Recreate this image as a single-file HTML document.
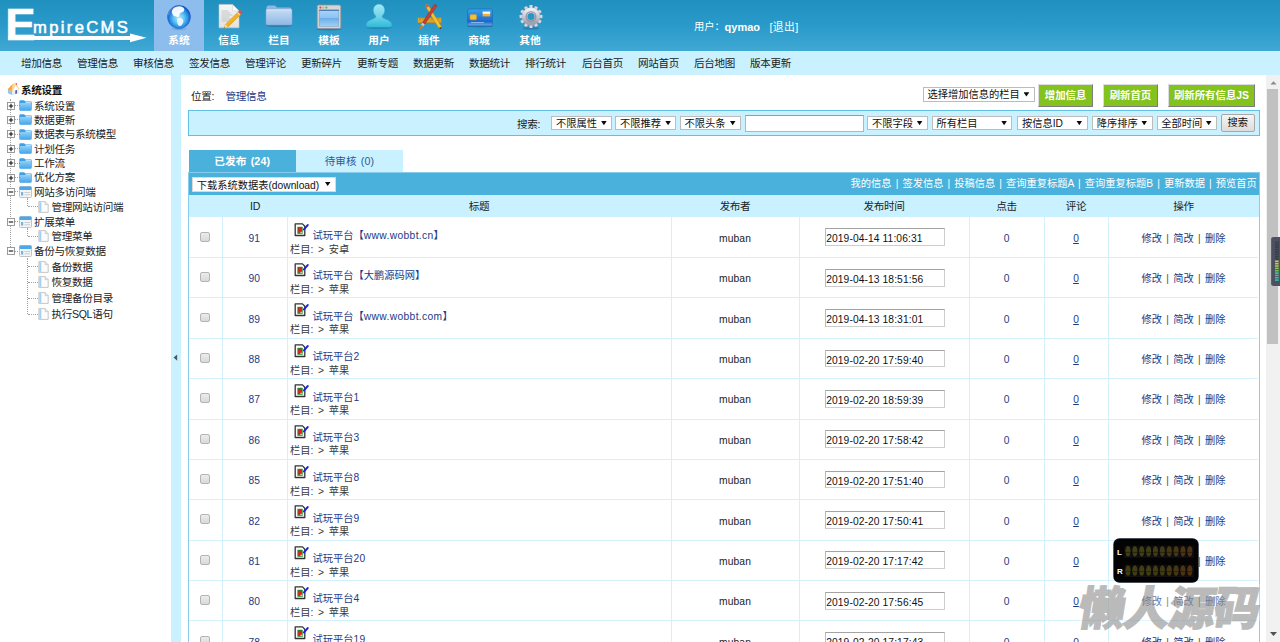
<!DOCTYPE html>
<html lang="zh-CN">
<head>
<meta charset="utf-8">
<title>EmpireCMS</title>
<style>
*{box-sizing:border-box;margin:0;padding:0}
html,body{width:1280px;height:642px;overflow:hidden;background:#c9f1ff}
body{position:relative;font-family:"Liberation Sans","Noto Sans CJK SC",sans-serif;font-size:10.25px;color:#222;line-height:1}
a{color:#1c3a85;text-decoration:none}
.abs{position:absolute}
/* header */
#hd{position:absolute;left:0;top:0;width:1280px;height:51px;background:linear-gradient(#2090bf,#2a9aca 50%,#40a8d4)}
#act{position:absolute;left:154px;top:0;width:50px;height:51px;background:#8cbdec}
.nv{position:absolute;top:35px;width:50px;text-align:center;color:#fff;font-weight:bold;font-size:10.7px;line-height:11px}
.ic{position:absolute;top:2px;width:30px;height:30px}
#usr{position:absolute;left:694px;top:20.700px;color:#fff;font-size:10.25px;line-height:12px;white-space:pre}
/* menu */
#mn{position:absolute;left:0;top:51px;width:1280px;height:24px;background:#c9f1ff}
#mn span{position:absolute;top:5.500px;font-size:10.6px;letter-spacing:-.35px;line-height:12px;color:#222;white-space:nowrap}
/* panels */
#lp{position:absolute;left:0;top:75px;width:171px;height:567px;background:#fff}
#mp{position:absolute;left:181px;top:75px;width:1086px;height:567px;background:#fff;overflow:hidden}
.tt{font-size:10.6px;letter-spacing:-.35px;line-height:12px;white-space:nowrap;color:#222}

.sel{position:absolute;height:14px;background:#fff;border:1px solid #bcbcbc;font-size:10.25px;line-height:14.800px;padding-left:3.700px;color:#111;white-space:nowrap;overflow:hidden}
.sel i{position:absolute;right:4.400px;top:4px;width:5.800px;height:4.400px;background:#0a0a0a;clip-path:polygon(0 0,100% 0,50% 100%)}
.gb{position:absolute;top:9.300px;height:22.600px;background:#84c21e;border:1.700px solid;border-color:#dcdce0 #7d7d7d #7d7d7d #dcdce0;color:#fff;font-weight:bold;font-size:10.4px;line-height:22.300px;text-align:center;white-space:nowrap}
#sb{position:absolute;left:7px;top:35px;width:1071.500px;height:26px;background:#c9f1ff;border:1px solid #63bfe6}
#tab1{position:absolute;left:7.700px;top:75.300px;width:107px;height:21.500px;background:#4ab1dc;color:#fff;font-weight:bold;text-align:center;font-size:10.7px;line-height:23.400px;word-spacing:1px;letter-spacing:.1px}
#tab2{position:absolute;left:114.700px;top:75.300px;width:107.300px;height:21.500px;background:#c9f1ff;color:#2a5c9a;text-align:center;font-size:10.6px;line-height:23.400px;word-spacing:1px;letter-spacing:.1px}
#tbar{position:absolute;left:7px;top:96.500px;width:1071.500px;height:23.400px;background:#4ab1dc}
#thr{position:absolute;left:7px;top:119.900px;width:1071.500px;height:22.300px;background:#c9f1ff}
#thr span{position:absolute;top:5px;font-size:10.6px;letter-spacing:-.35px;line-height:12px;color:#222;text-align:center}
#tb{position:absolute;left:7px;top:96.500px;width:1071.500px;height:480px;border:1px solid #86cdee;border-bottom:0}
.vl{position:absolute;top:142px;width:1px;height:430px;background:#d3f1fd}
.hl{position:absolute;left:8px;width:1069px;height:1px;background:#d3f1fd}
.r{position:absolute;left:0;width:1086px;height:40px;font-size:10.25px;line-height:12px;color:#222}
.r>*{position:absolute;white-space:nowrap}
.cb{left:19.300px;top:14.700px;width:9.800px;height:9.800px;border:1px solid #b4b4b4;border-radius:2px;background:linear-gradient(#ececec,#d9d9d9)}
.id{left:41.200px;top:15.800px;width:64px;text-align:center;color:#1c3a85}
.ti{left:131.500px;top:12.900px;color:#1c3a85}
.cl{left:109px;top:26.400px;color:#3a3a3a;word-spacing:1.900px}
.au{left:490px;top:15.800px;width:128px;text-align:center;color:#222;letter-spacing:.15px}
.dt{left:643.500px;top:11.300px;width:120.500px;height:17.700px;border:1px solid #cdcdcd;border-top-color:#a3a3a3;border-left-color:#bbb;background:#fff;padding-left:.7px;line-height:19.700px;color:#111;letter-spacing:.1px}
.hit{left:788px;top:15.800px;width:75px;text-align:center;color:#1c3a85}
.cm{left:863px;top:15.800px;width:64px;text-align:center;color:#1c3a85;text-decoration:underline}
.op{left:927px;top:15.800px;width:151px;text-align:center;color:#6e4a14;word-spacing:1.400px}
.op a{color:#1c3a85}
.l{letter-spacing:.36px}
</style>
</head>
<body>
<div id="hd">
  <div id="act"></div>
  <svg class="abs" style="left:0;top:0" width="154" height="51" viewBox="0 0 154 51">
    <text transform="translate(5.300,39.700) scale(1.020,1)" font-family="Liberation Sans, sans-serif" font-weight="bold" font-size="44.5" fill="#fff" stroke="#fff" stroke-width=".6">E</text>
    <rect x="8.3" y="36" width="124" height="4" fill="#fff"/>
    <polygon points="130,33.4 146.5,37.8 130,42.2" fill="#fff"/>
    <text x="33" y="33.4" font-family="Liberation Sans, sans-serif" font-size="16.6" letter-spacing="2.35" fill="#fff" stroke="#fff" stroke-width=".55">mpireCMS</text>
  </svg>
  <!-- globe -->
  <svg class="ic" style="left:164.400px;top:2.800px" viewBox="0 0 30 30">
    <defs>
      <radialGradient id="gl" cx="0.5" cy="0.55" r="0.52"><stop offset="0" stop-color="#bfeaff"/><stop offset="0.45" stop-color="#5cc3f3"/><stop offset="0.75" stop-color="#2b8be6"/><stop offset="1" stop-color="#0f4fc0"/></radialGradient>
      <radialGradient id="gs" cx="0.5" cy="0.5" r="0.5"><stop offset="0" stop-color="#3a6fb0" stop-opacity=".6"/><stop offset="1" stop-color="#3a6fb0" stop-opacity="0"/></radialGradient>
    </defs>
    <ellipse cx="15" cy="25.600" rx="9" ry="2.200" fill="url(#gs)"/>
    <circle cx="15" cy="14" r="11.700" fill="url(#gl)"/>
    <path d="M8.500 6.500c2-2.600 6.500-4 10-2.600 2 1 2.500 3 1 4.500-1.200 1.200-2.600.8-3.600 2-.9 1.200.2 2.600-1.400 3.400-1.500.6-2.300-1-3.600-.6-1.500.5-1.800-1.600-2.600-2.800-.7-1.200-.7-2.700.2-3.900z" fill="#fff" opacity=".93"/>
    <path d="M13.500 15.500c1.600-1 4.600-.4 5.600 1.300.9 1.600-.2 4.300-1.900 5.600-1.500 1.100-3 .3-3.500-1.400-.4-1.500-1.500-4.400-.2-5.500z" fill="#eefaff" opacity=".9"/>
    <path d="M3.600 12c.3-4.600 4.300-9 9.600-9.600-4 1.600-7.600 5.200-8 9.800z" fill="#fff" opacity=".25"/>
  </svg>
  <!-- doc + pencil -->
  <svg class="ic" style="left:214px" viewBox="0 0 30 30">
    <defs><linearGradient id="pg" x1="0" y1="0" x2="0" y2="1"><stop offset="0" stop-color="#f6f6f6"/><stop offset="1" stop-color="#e2e2e2"/></linearGradient>
    <linearGradient id="pc" x1="0" y1="0" x2="1" y2="1"><stop offset="0" stop-color="#ffd75a"/><stop offset=".5" stop-color="#f6b21b"/><stop offset="1" stop-color="#d98c0c"/></linearGradient></defs>
    <path d="M5 2.400h13.500l6.500 6.500v16.900h-20z" fill="url(#pg)" stroke="#c5c7c9" stroke-width=".6"/>
    <path d="M18.500 2.400v6.500h6.500z" fill="#fff" stroke="#c5c7c9" stroke-width=".5"/>
    <g stroke="#a9acae" stroke-width=".7" opacity=".85"><path d="M7.500 9h7M7.500 11h9M7.500 13h11M7.500 15h8M7.500 17h9M7.500 19h7"/></g>
    <path d="M10 26.300l1.400-3.900L24 9.800l2.700 2.700-12.700 12.500z" fill="url(#pc)" stroke="#c98a12" stroke-width=".4"/>
    <path d="M10 26.300l1.400-3.900 2.600 2.600z" fill="#f3dcb0"/><path d="M10 26.300l.5-1.400.9.900z" fill="#555"/>
    <path d="M23 10.800l1-1 2.700 2.700-1 1z" fill="#d8dadc"/>
    <path d="M24 9.800l1.200-1.200q.8-.6 1.600 0l1.200 1.200q.6.800 0 1.600l-1.300 1.100z" fill="#d9534f"/>
  </svg>
  <!-- folder -->
  <svg class="ic" style="left:264.200px;top:1.200px" viewBox="0 0 30 30">
    <defs><linearGradient id="fd" x1="0" y1="0" x2="0" y2="1"><stop offset="0" stop-color="#c6ddf5"/><stop offset="1" stop-color="#8fb7e4"/></linearGradient></defs>
    <ellipse cx="15" cy="24.5" rx="13" ry="1.6" fill="#2b5c86" opacity=".45"/>
    <path d="M2.5 6.5q0-2 2-2h6.5l2 2h12.5q2 0 2 2v2h-25z" fill="#93b5de"/>
    <rect x="2" y="8" width="26" height="16" rx="1.5" fill="url(#fd)" stroke="#82a6d2" stroke-width=".5"/>
    <path d="M2.5 9h25" stroke="#dbe9f8" stroke-width=".8"/>
  </svg>
  <!-- window -->
  <svg class="ic" style="left:314px" viewBox="0 0 30 30">
    <defs><linearGradient id="wn" x1="0" y1="0" x2="0" y2="1"><stop offset="0" stop-color="#a9d4f8"/><stop offset=".5" stop-color="#8cc2f2"/><stop offset=".52" stop-color="#6eaee9"/><stop offset="1" stop-color="#9ed0f7"/></linearGradient></defs>
    <ellipse cx="15" cy="27.2" rx="12.5" ry="1.3" fill="#2b5c86" opacity=".45"/>
    <rect x="3.2" y="3" width="23.6" height="23.5" rx="1.6" fill="#d4d6d6" stroke="#8f9496" stroke-width=".8"/>
    <rect x="5.2" y="8" width="19.6" height="16.3" fill="url(#wn)" stroke="#7a9cbd" stroke-width=".5"/><path d="M5.200 8.300h19.600" stroke="#2a63ad" stroke-width=".9"/>
    <circle cx="6.4" cy="5.6" r="1.1" fill="#e2483d"/><circle cx="9.4" cy="5.6" r="1.1" fill="#e9b531"/><circle cx="12.4" cy="5.6" r="1.1" fill="#5fb648"/>
  </svg>
  <!-- user -->
  <svg class="ic" style="left:364px" viewBox="0 0 30 30">
    <defs><linearGradient id="us" x1="0" y1="0" x2="0" y2="1"><stop offset="0" stop-color="#a3e8f4"/><stop offset=".55" stop-color="#6fd3ea"/><stop offset="1" stop-color="#2dbbdb"/></linearGradient></defs>
    <ellipse cx="15" cy="25.6" rx="12.5" ry="1.5" fill="#1f6b8f" opacity=".4"/>
    <path d="M15 2.2c3.4 0 5.6 2.6 5.6 6 0 2.5-1.2 4.6-2.6 5.9-.3 1.600 1.400 2.500 4.600 3.700 3.600 1.400 5 2.600 5 5.200 0 1.300-.8 2-2.200 2H4.600c-1.400 0-2.200-.7-2.200-2 0-2.600 1.400-3.800 5-5.200 3.200-1.200 4.900-2.100 4.600-3.700C10.600 12.800 9.400 10.700 9.400 8.200c0-3.400 2.200-6 5.600-6z" fill="url(#us)" stroke="#4fb3cc" stroke-width=".4"/>
  </svg>
  <!-- plugins -->
  <svg class="ic" style="left:414px" viewBox="0 0 30 30">
    <rect x="3.5" y="15.5" width="24" height="5.4" fill="#d7a430" stroke="#a87a18" stroke-width=".5"/>
    <g stroke="#9c7414" stroke-width=".6"><path d="M6 15.700v2.400M9 15.700v1.600M12 15.700v2.400M15 15.700v1.600M18 15.700v2.400M21 15.700v1.600M24 15.700v2.400"/></g>
    <path d="M11 3.600l2.600-1.500 14 22.600-.6 2.800-2.300-1.500z" fill="#f1c232" stroke="#b8860b" stroke-width=".5"/>
    <path d="M11 3.600l2.600-1.500 1.300 2.100-2.600 1.500z" fill="#d9534f"/>
    <path d="M27.600 24.700l-.6 2.800-2.300-1.500z" fill="#444"/>
    <path d="M20.600 2.200l2.500 1.400-12.300 18.600-2.500-1.400z" fill="#cc3b34" stroke="#8e2620" stroke-width=".4"/>
    <path d="M8.300 20.800l2.500 1.400-1.400 2.300-2.500-1.400z" fill="#c9c9c9"/>
    <path d="M6.900 23.100l2.500 1.400c-.6 1.800-2.600 3.400-5.200 3.300 1.400-1.300 1.800-3.100 2.700-4.700z" fill="#b78136"/>
  </svg>
  <!-- card -->
  <svg class="ic" style="left:465px" viewBox="0 0 30 30">
    <defs><linearGradient id="cd" x1="0" y1="0" x2="0" y2="1"><stop offset="0" stop-color="#3ba2ee"/><stop offset=".75" stop-color="#1c68cc"/><stop offset="1" stop-color="#6fb0ea"/></linearGradient></defs>
    <ellipse cx="15" cy="24.200" rx="13" ry="1.300" fill="#1f4f7f" opacity=".45"/>
    <rect x="2.600" y="7" width="24.800" height="16.800" rx="1.600" fill="url(#cd)" stroke="#1a5cb0" stroke-width=".5"/>
    <rect x="5" y="12.600" width="6.600" height="5.200" rx="1.200" fill="#f2c230" stroke="#c99a1b" stroke-width=".5"/>
    <rect x="17.600" y="9.600" width="7.600" height="2.300" fill="#fff"/>
    <rect x="17.600" y="11.900" width="7.600" height="2.500" fill="#f2b12c"/>
    <path d="M6 20.600h13" stroke="#a9cdf2" stroke-width=".8"/>
  </svg>
  <!-- gear -->
  <svg class="ic" style="left:515.500px;top:1.700px" viewBox="0 0 30 30">
    <defs><linearGradient id="gr" x1="0" y1="0" x2="0" y2="1"><stop offset="0" stop-color="#ecedf2"/><stop offset="1" stop-color="#a0a2b2"/></linearGradient></defs>
    <ellipse cx="15" cy="26.300" rx="8.500" ry="1.300" fill="#1f4f7f" opacity=".4"/>
    <g fill="url(#gr)" stroke="#9a9cab" stroke-width=".3">
      <g id="tth"><path d="M13.500 3.400l.5-.3h2l.5.300.600 4.600h-4.200z"/></g>
      <use href="#tth" transform="rotate(30 15 14.500)"/><use href="#tth" transform="rotate(60 15 14.500)"/><use href="#tth" transform="rotate(90 15 14.500)"/>
      <use href="#tth" transform="rotate(120 15 14.500)"/><use href="#tth" transform="rotate(150 15 14.500)"/><use href="#tth" transform="rotate(180 15 14.500)"/>
      <use href="#tth" transform="rotate(210 15 14.500)"/><use href="#tth" transform="rotate(240 15 14.500)"/><use href="#tth" transform="rotate(270 15 14.500)"/>
      <use href="#tth" transform="rotate(300 15 14.500)"/><use href="#tth" transform="rotate(330 15 14.500)"/>
    </g>
    <circle cx="15" cy="14.500" r="6.200" fill="none" stroke="url(#gr)" stroke-width="5.400"/>
    <circle cx="15" cy="14.500" r="4.700" fill="none" stroke="#8b8d9e" stroke-width="1.600" opacity=".75"/>
  </svg>
  <div class="nv" style="left:154px">系统</div>
  <div class="nv" style="left:204px">信息</div>
  <div class="nv" style="left:254px">栏目</div>
  <div class="nv" style="left:304px">模板</div>
  <div class="nv" style="left:354px">用户</div>
  <div class="nv" style="left:404px">插件</div>
  <div class="nv" style="left:454px">商城</div>
  <div class="nv" style="left:505px">其他</div>
  <div id="usr">用户：<b style="position:absolute;left:30.600px;font-size:11px">qymao</b><span style="position:absolute;left:75.400px;font-size:10.8px;letter-spacing:.4px">[退出]</span></div>
</div>
<div id="mn">
  <span style="left:21px">增加信息</span><span style="left:77px">管理信息</span><span style="left:133px">审核信息</span><span style="left:189px">签发信息</span><span style="left:245px">管理评论</span><span style="left:301px">更新碎片</span><span style="left:357px">更新专题</span><span style="left:413px">数据更新</span><span style="left:469px">数据统计</span><span style="left:525px">排行统计</span><span style="left:582px">后台首页</span><span style="left:638px">网站首页</span><span style="left:694px">后台地图</span><span style="left:750px">版本更新</span>
</div>
<svg width="0" height="0" style="position:absolute"><defs><linearGradient id="fg" x1="0" y1="0" x2="0" y2="1"><stop offset="0" stop-color="#8fd0f8"/><stop offset="1" stop-color="#49a8ec"/></linearGradient></defs></svg>
<div id="lp">
<svg class="abs" style="left:6.500px;top:8px" width="13" height="13" viewBox="0 0 13 13"><path d="M1 6.500l4.200 1.800v4L1 10.200z" fill="#9cc4ee"/><path d="M5.200 8.300l6.800-2.500v4.700l-6.800 1.800z" fill="#e3eefb"/><path d="M8.300 7.600l1.700-.6v3.600l-1.700.5z" fill="#5a5a9a"/><path d="M.4 6.600L5.600 1l3.200-.6L5.400 8.600z" fill="#f7a63a"/><path d="M5.600 1l3.200-.6 4 5.600-1 .6-3.200-4.200L5.400 8.600 4.600 8z" fill="#fbd9a0"/><path d="M8.600.2l.9-.1.700 1.400-.9.400z" fill="#e2483d"/></svg>
<div class="abs tt" style="left:21px;top:9.200px;font-weight:bold;color:#111">系统设置</div>
<div class="abs" style="left:10px;top:24px;width:0;height:152px;border-left:1px dotted #a2a2a2"></div>
<div class="abs" style="left:14px;top:30.3px;width:6px;height:0;border-top:1px dotted #a2a2a2"></div>
<svg class="abs" style="left:6.800px;top:26.9px" width="8" height="8" viewBox="0 0 8 8"><rect x=".5" y=".5" width="7" height="7" fill="#fff" stroke="#909090" stroke-width=".9"/><path d="M1.800 4h4.400M4 1.800v4.400" stroke="#111" stroke-width="1.100"/></svg>
<svg class="abs" style="left:19.400px;top:25.3px" width="13" height="11" viewBox="0 0 13 11"><path d="M.3 1.600q0-1.300 1.300-1.300h3.200q.8 0 1.200.9h5.400q1.300 0 1.300 1.300v6.900q0 1.300-1.300 1.300h-9.800q-1.300 0-1.300-1.300z" fill="#3d9fe6"/><path d="M6.300 1.500h4.900q.9 0 .9.900v.8h-5.200z" fill="#b4e1fb"/><rect x="1" y="3.100" width="11" height="6.900" rx=".8" fill="url(#fg)"/></svg>
<div class="abs tt" style="left:34px;top:24.8px">系统设置</div>
<div class="abs" style="left:14px;top:44.4px;width:6px;height:0;border-top:1px dotted #a2a2a2"></div>
<svg class="abs" style="left:6.800px;top:41.0px" width="8" height="8" viewBox="0 0 8 8"><rect x=".5" y=".5" width="7" height="7" fill="#fff" stroke="#909090" stroke-width=".9"/><path d="M1.800 4h4.400M4 1.800v4.400" stroke="#111" stroke-width="1.100"/></svg>
<svg class="abs" style="left:19.400px;top:39.4px" width="13" height="11" viewBox="0 0 13 11"><path d="M.3 1.600q0-1.300 1.300-1.300h3.200q.8 0 1.200.9h5.400q1.300 0 1.300 1.300v6.900q0 1.300-1.300 1.300h-9.800q-1.300 0-1.300-1.300z" fill="#3d9fe6"/><path d="M6.300 1.500h4.900q.9 0 .9.900v.8h-5.200z" fill="#b4e1fb"/><rect x="1" y="3.100" width="11" height="6.900" rx=".8" fill="url(#fg)"/></svg>
<div class="abs tt" style="left:34px;top:38.9px">数据更新</div>
<div class="abs" style="left:14px;top:58.8px;width:6px;height:0;border-top:1px dotted #a2a2a2"></div>
<svg class="abs" style="left:6.800px;top:55.4px" width="8" height="8" viewBox="0 0 8 8"><rect x=".5" y=".5" width="7" height="7" fill="#fff" stroke="#909090" stroke-width=".9"/><path d="M1.800 4h4.400M4 1.800v4.400" stroke="#111" stroke-width="1.100"/></svg>
<svg class="abs" style="left:19.400px;top:53.8px" width="13" height="11" viewBox="0 0 13 11"><path d="M.3 1.600q0-1.300 1.300-1.300h3.200q.8 0 1.200.9h5.400q1.300 0 1.300 1.300v6.900q0 1.300-1.300 1.300h-9.800q-1.300 0-1.300-1.300z" fill="#3d9fe6"/><path d="M6.300 1.500h4.900q.9 0 .9.900v.8h-5.200z" fill="#b4e1fb"/><rect x="1" y="3.100" width="11" height="6.900" rx=".8" fill="url(#fg)"/></svg>
<div class="abs tt" style="left:34px;top:53.3px">数据表与系统模型</div>
<div class="abs" style="left:14px;top:73.1px;width:6px;height:0;border-top:1px dotted #a2a2a2"></div>
<svg class="abs" style="left:6.800px;top:69.7px" width="8" height="8" viewBox="0 0 8 8"><rect x=".5" y=".5" width="7" height="7" fill="#fff" stroke="#909090" stroke-width=".9"/><path d="M1.800 4h4.400M4 1.800v4.400" stroke="#111" stroke-width="1.100"/></svg>
<svg class="abs" style="left:19.400px;top:68.1px" width="13" height="11" viewBox="0 0 13 11"><path d="M.3 1.600q0-1.300 1.300-1.300h3.200q.8 0 1.200.9h5.400q1.300 0 1.300 1.300v6.900q0 1.300-1.300 1.300h-9.800q-1.300 0-1.300-1.300z" fill="#3d9fe6"/><path d="M6.300 1.500h4.900q.9 0 .9.900v.8h-5.200z" fill="#b4e1fb"/><rect x="1" y="3.100" width="11" height="6.900" rx=".8" fill="url(#fg)"/></svg>
<div class="abs tt" style="left:34px;top:67.6px">计划任务</div>
<div class="abs" style="left:14px;top:87.6px;width:6px;height:0;border-top:1px dotted #a2a2a2"></div>
<svg class="abs" style="left:6.800px;top:84.2px" width="8" height="8" viewBox="0 0 8 8"><rect x=".5" y=".5" width="7" height="7" fill="#fff" stroke="#909090" stroke-width=".9"/><path d="M1.800 4h4.400M4 1.800v4.400" stroke="#111" stroke-width="1.100"/></svg>
<svg class="abs" style="left:19.400px;top:82.6px" width="13" height="11" viewBox="0 0 13 11"><path d="M.3 1.600q0-1.300 1.300-1.300h3.200q.8 0 1.200.9h5.400q1.300 0 1.300 1.300v6.900q0 1.300-1.300 1.300h-9.800q-1.300 0-1.300-1.300z" fill="#3d9fe6"/><path d="M6.300 1.500h4.900q.9 0 .9.900v.8h-5.200z" fill="#b4e1fb"/><rect x="1" y="3.100" width="11" height="6.900" rx=".8" fill="url(#fg)"/></svg>
<div class="abs tt" style="left:34px;top:82.1px">工作流</div>
<div class="abs" style="left:14px;top:101.9px;width:6px;height:0;border-top:1px dotted #a2a2a2"></div>
<svg class="abs" style="left:6.800px;top:98.5px" width="8" height="8" viewBox="0 0 8 8"><rect x=".5" y=".5" width="7" height="7" fill="#fff" stroke="#909090" stroke-width=".9"/><path d="M1.800 4h4.400M4 1.800v4.400" stroke="#111" stroke-width="1.100"/></svg>
<svg class="abs" style="left:19.400px;top:96.9px" width="13" height="11" viewBox="0 0 13 11"><path d="M.3 1.600q0-1.300 1.300-1.300h3.200q.8 0 1.200.9h5.400q1.300 0 1.300 1.300v6.900q0 1.300-1.300 1.300h-9.800q-1.300 0-1.300-1.300z" fill="#3d9fe6"/><path d="M6.300 1.500h4.900q.9 0 .9.900v.8h-5.200z" fill="#b4e1fb"/><rect x="1" y="3.100" width="11" height="6.900" rx=".8" fill="url(#fg)"/></svg>
<div class="abs tt" style="left:34px;top:96.4px">优化方案</div>
<div class="abs" style="left:14px;top:116.3px;width:6px;height:0;border-top:1px dotted #a2a2a2"></div>
<svg class="abs" style="left:6.800px;top:112.9px" width="8" height="8" viewBox="0 0 8 8"><rect x=".5" y=".5" width="7" height="7" fill="#fff" stroke="#909090" stroke-width=".9"/><path d="M1.800 4h4.400" stroke="#111" stroke-width="1.100"/></svg>
<svg class="abs" style="left:19px;top:110.8px" width="13" height="12" viewBox="0 0 13 12"><rect x=".5" y=".5" width="12" height="11" rx="1" fill="#f4f4f4" stroke="#b5b5b5" stroke-width=".8"/><rect x=".5" y=".5" width="12" height="3.600" rx="1" fill="#4aa8ea"/><rect x="2" y="6" width="2.200" height="3.600" fill="#6db6ee"/><path d="M5.500 6.500h5.500M5.500 8.800h5.500" stroke="#c8c8c8" stroke-width=".9"/></svg>
<div class="abs tt" style="left:34px;top:110.8px">网站多访问端</div>
<div class="abs" style="left:28px;top:131.0px;width:10px;height:0;border-top:1px dotted #a2a2a2"></div>
<svg class="abs" style="left:38px;top:125.5px" width="11" height="12" viewBox="0 0 11 12"><path d="M.8.600h6.400l3 3v7.800H.8z" fill="#fbfbfb" stroke="#b9b9b9" stroke-width=".8"/><path d="M7.200.6v3h3" fill="#e9e9e9" stroke="#b9b9b9" stroke-width=".6"/><rect x="1.300" y="1.200" width="2" height="9.600" fill="#9fd0f5"/></svg>
<div class="abs tt" style="left:51.500px;top:125.5px">管理网站访问端</div>
<div class="abs" style="left:14px;top:146.1px;width:6px;height:0;border-top:1px dotted #a2a2a2"></div>
<svg class="abs" style="left:6.800px;top:142.7px" width="8" height="8" viewBox="0 0 8 8"><rect x=".5" y=".5" width="7" height="7" fill="#fff" stroke="#909090" stroke-width=".9"/><path d="M1.800 4h4.400" stroke="#111" stroke-width="1.100"/></svg>
<svg class="abs" style="left:19px;top:140.6px" width="13" height="12" viewBox="0 0 13 12"><rect x=".5" y=".5" width="12" height="11" rx="1" fill="#f4f4f4" stroke="#b5b5b5" stroke-width=".8"/><rect x=".5" y=".5" width="12" height="3.600" rx="1" fill="#4aa8ea"/><rect x="2" y="6" width="2.200" height="3.600" fill="#6db6ee"/><path d="M5.500 6.500h5.500M5.500 8.800h5.500" stroke="#c8c8c8" stroke-width=".9"/></svg>
<div class="abs tt" style="left:34px;top:140.6px">扩展菜单</div>
<div class="abs" style="left:28px;top:160.7px;width:10px;height:0;border-top:1px dotted #a2a2a2"></div>
<svg class="abs" style="left:38px;top:155.2px" width="11" height="12" viewBox="0 0 11 12"><path d="M.8.600h6.400l3 3v7.800H.8z" fill="#fbfbfb" stroke="#b9b9b9" stroke-width=".8"/><path d="M7.200.6v3h3" fill="#e9e9e9" stroke="#b9b9b9" stroke-width=".6"/><rect x="1.300" y="1.200" width="2" height="9.600" fill="#9fd0f5"/></svg>
<div class="abs tt" style="left:51.500px;top:155.2px">管理菜单</div>
<div class="abs" style="left:14px;top:175.8px;width:6px;height:0;border-top:1px dotted #a2a2a2"></div>
<svg class="abs" style="left:6.800px;top:172.4px" width="8" height="8" viewBox="0 0 8 8"><rect x=".5" y=".5" width="7" height="7" fill="#fff" stroke="#909090" stroke-width=".9"/><path d="M1.800 4h4.400" stroke="#111" stroke-width="1.100"/></svg>
<svg class="abs" style="left:19px;top:170.3px" width="13" height="12" viewBox="0 0 13 12"><rect x=".5" y=".5" width="12" height="11" rx="1" fill="#f4f4f4" stroke="#b5b5b5" stroke-width=".8"/><rect x=".5" y=".5" width="12" height="3.600" rx="1" fill="#4aa8ea"/><rect x="2" y="6" width="2.200" height="3.600" fill="#6db6ee"/><path d="M5.500 6.500h5.500M5.500 8.800h5.500" stroke="#c8c8c8" stroke-width=".9"/></svg>
<div class="abs tt" style="left:34px;top:170.3px">备份与恢复数据</div>
<div class="abs" style="left:28px;top:191.0px;width:10px;height:0;border-top:1px dotted #a2a2a2"></div>
<svg class="abs" style="left:38px;top:185.5px" width="11" height="12" viewBox="0 0 11 12"><path d="M.8.600h6.400l3 3v7.800H.8z" fill="#fbfbfb" stroke="#b9b9b9" stroke-width=".8"/><path d="M7.200.6v3h3" fill="#e9e9e9" stroke="#b9b9b9" stroke-width=".6"/><rect x="1.300" y="1.200" width="2" height="9.600" fill="#9fd0f5"/></svg>
<div class="abs tt" style="left:51.500px;top:185.5px">备份数据</div>
<div class="abs" style="left:28px;top:206.6px;width:10px;height:0;border-top:1px dotted #a2a2a2"></div>
<svg class="abs" style="left:38px;top:201.1px" width="11" height="12" viewBox="0 0 11 12"><path d="M.8.600h6.400l3 3v7.800H.8z" fill="#fbfbfb" stroke="#b9b9b9" stroke-width=".8"/><path d="M7.200.6v3h3" fill="#e9e9e9" stroke="#b9b9b9" stroke-width=".6"/><rect x="1.300" y="1.200" width="2" height="9.600" fill="#9fd0f5"/></svg>
<div class="abs tt" style="left:51.500px;top:201.1px">恢复数据</div>
<div class="abs" style="left:28px;top:222.5px;width:10px;height:0;border-top:1px dotted #a2a2a2"></div>
<svg class="abs" style="left:38px;top:217.0px" width="11" height="12" viewBox="0 0 11 12"><path d="M.8.600h6.400l3 3v7.800H.8z" fill="#fbfbfb" stroke="#b9b9b9" stroke-width=".8"/><path d="M7.200.6v3h3" fill="#e9e9e9" stroke="#b9b9b9" stroke-width=".6"/><rect x="1.300" y="1.200" width="2" height="9.600" fill="#9fd0f5"/></svg>
<div class="abs tt" style="left:51.500px;top:217.0px">管理备份目录</div>
<div class="abs" style="left:28px;top:238.6px;width:10px;height:0;border-top:1px dotted #a2a2a2"></div>
<svg class="abs" style="left:38px;top:233.1px" width="11" height="12" viewBox="0 0 11 12"><path d="M.8.600h6.400l3 3v7.800H.8z" fill="#fbfbfb" stroke="#b9b9b9" stroke-width=".8"/><path d="M7.200.6v3h3" fill="#e9e9e9" stroke="#b9b9b9" stroke-width=".6"/><rect x="1.300" y="1.200" width="2" height="9.600" fill="#9fd0f5"/></svg>
<div class="abs tt" style="left:51.500px;top:233.1px">执行SQL语句</div>
<div class="abs" style="left:27px;top:123px;width:0;height:8px;border-left:1px dotted #a2a2a2"></div>
<div class="abs" style="left:27px;top:153px;width:0;height:8px;border-left:1px dotted #a2a2a2"></div>
<div class="abs" style="left:27px;top:183px;width:0;height:56px;border-left:1px dotted #a2a2a2"></div>
</div>
<div id="mp">
<div class="abs tt" style="left:10px;top:14.500px">位置:<a style="margin-left:11.500px">管理信息</a></div>
<div class="sel" style="left:741.700px;top:12.200px;width:112px;height:14.600px;line-height:14.600px">选择增加信息的栏目<i></i></div>
<div class="gb" style="left:857.400px;width:54.400px">增加信息</div>
<div class="gb" style="left:922.300px;width:54.400px">刷新首页</div>
<div class="gb" style="left:986.800px;width:87.400px">刷新所有信息JS</div>
<div id="sb">
<div class="abs tt" style="left:328px;top:6.800px">搜索:</div>
<div class="sel" style="left:362.2px;top:4.8px;width:61px">不限属性<i></i></div>
<div class="sel" style="left:426.4px;top:4.8px;width:61px">不限推荐<i></i></div>
<div class="sel" style="left:490.8px;top:4.8px;width:61.2px">不限头条<i></i></div>
<div class="sel" style="left:678.4px;top:4.8px;width:60.5px">不限字段<i></i></div>
<div class="sel" style="left:742.9px;top:4.8px;width:80.5px">所有栏目<i></i></div>
<div class="sel" style="left:828.3px;top:4.8px;width:70.3px">按信息ID<i></i></div>
<div class="sel" style="left:903px;top:4.8px;width:60.5px">降序排序<i></i></div>
<div class="sel" style="left:967.5px;top:4.8px;width:60.5px">全部时间<i></i></div>
<div class="abs" style="left:555.8px;top:4px;width:119.600px;height:16.500px;background:#fff;border:1px solid #b5b5b5;border-top-color:#9a9a9a"></div>
<div class="abs" style="left:1031.5px;top:3px;width:34.300px;height:18.400px;background:linear-gradient(#f4f4f4,#dcdcdc);border:1px solid #a8a8a8;border-radius:2px;font-size:10.25px;line-height:16px;text-align:center;color:#111">搜索</div>
</div>
<div id="tab1">已发布 (24)</div><div id="tab2">待审核 (0)</div>
<div id="tbar">
<div class="sel" style="left:4px;top:5.200px;width:144px;height:15px;line-height:15px;border-color:#d9d9d9">下载系统数据表(download)<i></i></div>
<div class="abs" style="right:2.700px;top:6.800px;font-size:10.25px;line-height:12px;color:#fff;white-space:nowrap;word-spacing:1.250px">我的信息 | 签发信息 | 投稿信息 | 查询重复标题A | 查询重复标题B | 更新数据 | 预览首页</div>
</div>
<div id="thr">
<span style="left:35px;width:64px">ID</span>
<span style="left:99px;width:384px">标题</span>
<span style="left:483px;width:128px">发布者</span>
<span style="left:611px;width:170px">发布时间</span>
<span style="left:781px;width:75px">点击</span>
<span style="left:856px;width:64px">评论</span>
<span style="left:920px;width:151px">操作</span>
</div>
<div id="tb"></div>
<div class="vl" style="left:41px"></div>
<div class="vl" style="left:106px"></div>
<div class="vl" style="left:490px"></div>
<div class="vl" style="left:618px"></div>
<div class="vl" style="left:788px"></div>
<div class="vl" style="left:863px"></div>
<div class="vl" style="left:927px"></div>
<div class="hl" style="top:182.07px"></div>
<div class="r" style="top:142.20px"><div class="cb"></div><div class="id">91</div><svg style="left:112.700px;top:5.500px" width="15" height="15" viewBox="0 0 15 15"><path d="M1.200 .9h7.300l2.300 2.300v9.300H1.200z" fill="#fff" stroke="#333" stroke-width="1.300" stroke-linejoin="round"/><rect x="3.400" y="3.800" width="5.300" height="7" fill="#1e8a2a"/><rect x="4.300" y="4.800" width="3" height="5" rx="1.200" fill="#f01818"/><path d="M6.300 8.800h2v1.300h-2z" fill="#d8f0d8" opacity=".8"/><path d="M13.700 2.100L10 6.400" stroke="#1a22e0" stroke-width="2" stroke-linecap="round"/></svg><div class="ti">试玩平台【<span class="l">www.wobbt.cn</span>】</div><div class="cl">栏目: &gt; 安卓</div><div class="au">muban</div><div class="dt">2019-04-14 11:06:31</div><div class="hit">0</div><div class="cm">0</div><div class="op"><a>修改</a> | <a>简改</a> | <a>删除</a></div></div>
<div class="hl" style="top:222.44px"></div>
<div class="r" style="top:182.57px"><div class="cb"></div><div class="id">90</div><svg style="left:112.700px;top:5.500px" width="15" height="15" viewBox="0 0 15 15"><path d="M1.200 .9h7.300l2.300 2.300v9.300H1.200z" fill="#fff" stroke="#333" stroke-width="1.300" stroke-linejoin="round"/><rect x="3.400" y="3.800" width="5.300" height="7" fill="#1e8a2a"/><rect x="4.300" y="4.800" width="3" height="5" rx="1.200" fill="#f01818"/><path d="M6.300 8.800h2v1.300h-2z" fill="#d8f0d8" opacity=".8"/><path d="M13.700 2.100L10 6.400" stroke="#1a22e0" stroke-width="2" stroke-linecap="round"/></svg><div class="ti">试玩平台【大鹏源码网】</div><div class="cl">栏目: &gt; 苹果</div><div class="au">muban</div><div class="dt">2019-04-13 18:51:56</div><div class="hit">0</div><div class="cm">0</div><div class="op"><a>修改</a> | <a>简改</a> | <a>删除</a></div></div>
<div class="hl" style="top:262.81px"></div>
<div class="r" style="top:222.94px"><div class="cb"></div><div class="id">89</div><svg style="left:112.700px;top:5.500px" width="15" height="15" viewBox="0 0 15 15"><path d="M1.200 .9h7.300l2.300 2.300v9.300H1.200z" fill="#fff" stroke="#333" stroke-width="1.300" stroke-linejoin="round"/><rect x="3.400" y="3.800" width="5.300" height="7" fill="#1e8a2a"/><rect x="4.300" y="4.800" width="3" height="5" rx="1.200" fill="#f01818"/><path d="M6.300 8.800h2v1.300h-2z" fill="#d8f0d8" opacity=".8"/><path d="M13.700 2.100L10 6.400" stroke="#1a22e0" stroke-width="2" stroke-linecap="round"/></svg><div class="ti">试玩平台【<span class="l">www.wobbt.com</span>】</div><div class="cl">栏目: &gt; 苹果</div><div class="au">muban</div><div class="dt">2019-04-13 18:31:01</div><div class="hit">0</div><div class="cm">0</div><div class="op"><a>修改</a> | <a>简改</a> | <a>删除</a></div></div>
<div class="hl" style="top:303.18px"></div>
<div class="r" style="top:263.31px"><div class="cb"></div><div class="id">88</div><svg style="left:112.700px;top:5.500px" width="15" height="15" viewBox="0 0 15 15"><path d="M1.200 .9h7.300l2.300 2.300v9.300H1.200z" fill="#fff" stroke="#333" stroke-width="1.300" stroke-linejoin="round"/><rect x="3.400" y="3.800" width="5.300" height="7" fill="#1e8a2a"/><rect x="4.300" y="4.800" width="3" height="5" rx="1.200" fill="#f01818"/><path d="M6.300 8.800h2v1.300h-2z" fill="#d8f0d8" opacity=".8"/><path d="M13.700 2.100L10 6.400" stroke="#1a22e0" stroke-width="2" stroke-linecap="round"/></svg><div class="ti">试玩平台<span class="l">2</span></div><div class="cl">栏目: &gt; 苹果</div><div class="au">muban</div><div class="dt">2019-02-20 17:59:40</div><div class="hit">0</div><div class="cm">0</div><div class="op"><a>修改</a> | <a>简改</a> | <a>删除</a></div></div>
<div class="hl" style="top:343.55px"></div>
<div class="r" style="top:303.68px"><div class="cb"></div><div class="id">87</div><svg style="left:112.700px;top:5.500px" width="15" height="15" viewBox="0 0 15 15"><path d="M1.200 .9h7.300l2.300 2.300v9.300H1.200z" fill="#fff" stroke="#333" stroke-width="1.300" stroke-linejoin="round"/><rect x="3.400" y="3.800" width="5.300" height="7" fill="#1e8a2a"/><rect x="4.300" y="4.800" width="3" height="5" rx="1.200" fill="#f01818"/><path d="M6.300 8.800h2v1.300h-2z" fill="#d8f0d8" opacity=".8"/><path d="M13.700 2.100L10 6.400" stroke="#1a22e0" stroke-width="2" stroke-linecap="round"/></svg><div class="ti">试玩平台<span class="l">1</span></div><div class="cl">栏目: &gt; 苹果</div><div class="au">muban</div><div class="dt">2019-02-20 18:59:39</div><div class="hit">0</div><div class="cm">0</div><div class="op"><a>修改</a> | <a>简改</a> | <a>删除</a></div></div>
<div class="hl" style="top:383.92px"></div>
<div class="r" style="top:344.05px"><div class="cb"></div><div class="id">86</div><svg style="left:112.700px;top:5.500px" width="15" height="15" viewBox="0 0 15 15"><path d="M1.200 .9h7.300l2.300 2.300v9.300H1.200z" fill="#fff" stroke="#333" stroke-width="1.300" stroke-linejoin="round"/><rect x="3.400" y="3.800" width="5.300" height="7" fill="#1e8a2a"/><rect x="4.300" y="4.800" width="3" height="5" rx="1.200" fill="#f01818"/><path d="M6.300 8.800h2v1.300h-2z" fill="#d8f0d8" opacity=".8"/><path d="M13.700 2.100L10 6.400" stroke="#1a22e0" stroke-width="2" stroke-linecap="round"/></svg><div class="ti">试玩平台<span class="l">3</span></div><div class="cl">栏目: &gt; 苹果</div><div class="au">muban</div><div class="dt">2019-02-20 17:58:42</div><div class="hit">0</div><div class="cm">0</div><div class="op"><a>修改</a> | <a>简改</a> | <a>删除</a></div></div>
<div class="hl" style="top:424.29px"></div>
<div class="r" style="top:384.42px"><div class="cb"></div><div class="id">85</div><svg style="left:112.700px;top:5.500px" width="15" height="15" viewBox="0 0 15 15"><path d="M1.200 .9h7.300l2.300 2.300v9.300H1.200z" fill="#fff" stroke="#333" stroke-width="1.300" stroke-linejoin="round"/><rect x="3.400" y="3.800" width="5.300" height="7" fill="#1e8a2a"/><rect x="4.300" y="4.800" width="3" height="5" rx="1.200" fill="#f01818"/><path d="M6.300 8.800h2v1.300h-2z" fill="#d8f0d8" opacity=".8"/><path d="M13.700 2.100L10 6.400" stroke="#1a22e0" stroke-width="2" stroke-linecap="round"/></svg><div class="ti">试玩平台<span class="l">8</span></div><div class="cl">栏目: &gt; 苹果</div><div class="au">muban</div><div class="dt">2019-02-20 17:51:40</div><div class="hit">0</div><div class="cm">0</div><div class="op"><a>修改</a> | <a>简改</a> | <a>删除</a></div></div>
<div class="hl" style="top:464.66px"></div>
<div class="r" style="top:424.79px"><div class="cb"></div><div class="id">82</div><svg style="left:112.700px;top:5.500px" width="15" height="15" viewBox="0 0 15 15"><path d="M1.200 .9h7.300l2.300 2.300v9.300H1.200z" fill="#fff" stroke="#333" stroke-width="1.300" stroke-linejoin="round"/><rect x="3.400" y="3.800" width="5.300" height="7" fill="#1e8a2a"/><rect x="4.300" y="4.800" width="3" height="5" rx="1.200" fill="#f01818"/><path d="M6.300 8.800h2v1.300h-2z" fill="#d8f0d8" opacity=".8"/><path d="M13.700 2.100L10 6.400" stroke="#1a22e0" stroke-width="2" stroke-linecap="round"/></svg><div class="ti">试玩平台<span class="l">9</span></div><div class="cl">栏目: &gt; 苹果</div><div class="au">muban</div><div class="dt">2019-02-20 17:50:41</div><div class="hit">0</div><div class="cm">0</div><div class="op"><a>修改</a> | <a>简改</a> | <a>删除</a></div></div>
<div class="hl" style="top:505.03px"></div>
<div class="r" style="top:465.16px"><div class="cb"></div><div class="id">81</div><svg style="left:112.700px;top:5.500px" width="15" height="15" viewBox="0 0 15 15"><path d="M1.200 .9h7.300l2.300 2.300v9.300H1.200z" fill="#fff" stroke="#333" stroke-width="1.300" stroke-linejoin="round"/><rect x="3.400" y="3.800" width="5.300" height="7" fill="#1e8a2a"/><rect x="4.300" y="4.800" width="3" height="5" rx="1.200" fill="#f01818"/><path d="M6.300 8.800h2v1.300h-2z" fill="#d8f0d8" opacity=".8"/><path d="M13.700 2.100L10 6.400" stroke="#1a22e0" stroke-width="2" stroke-linecap="round"/></svg><div class="ti">试玩平台<span class="l">20</span></div><div class="cl">栏目: &gt; 苹果</div><div class="au">muban</div><div class="dt">2019-02-20 17:17:42</div><div class="hit">0</div><div class="cm">0</div><div class="op"><a>修改</a> | <a>简改</a> | <a>删除</a></div></div>
<div class="hl" style="top:545.40px"></div>
<div class="r" style="top:505.53px"><div class="cb"></div><div class="id">80</div><svg style="left:112.700px;top:5.500px" width="15" height="15" viewBox="0 0 15 15"><path d="M1.200 .9h7.300l2.300 2.300v9.300H1.200z" fill="#fff" stroke="#333" stroke-width="1.300" stroke-linejoin="round"/><rect x="3.400" y="3.800" width="5.300" height="7" fill="#1e8a2a"/><rect x="4.300" y="4.800" width="3" height="5" rx="1.200" fill="#f01818"/><path d="M6.300 8.800h2v1.300h-2z" fill="#d8f0d8" opacity=".8"/><path d="M13.700 2.100L10 6.400" stroke="#1a22e0" stroke-width="2" stroke-linecap="round"/></svg><div class="ti">试玩平台<span class="l">4</span></div><div class="cl">栏目: &gt; 苹果</div><div class="au">muban</div><div class="dt">2019-02-20 17:56:45</div><div class="hit">0</div><div class="cm">0</div><div class="op"><a>修改</a> | <a>简改</a> | <a>删除</a></div></div>
<div class="hl" style="top:585.77px"></div>
<div class="r" style="top:545.90px"><div class="cb"></div><div class="id">78</div><svg style="left:112.700px;top:5.500px" width="15" height="15" viewBox="0 0 15 15"><path d="M1.200 .9h7.300l2.300 2.300v9.300H1.200z" fill="#fff" stroke="#333" stroke-width="1.300" stroke-linejoin="round"/><rect x="3.400" y="3.800" width="5.300" height="7" fill="#1e8a2a"/><rect x="4.300" y="4.800" width="3" height="5" rx="1.200" fill="#f01818"/><path d="M6.300 8.800h2v1.300h-2z" fill="#d8f0d8" opacity=".8"/><path d="M13.700 2.100L10 6.400" stroke="#1a22e0" stroke-width="2" stroke-linecap="round"/></svg><div class="ti">试玩平台<span class="l">19</span></div><div class="cl">栏目: &gt; 苹果</div><div class="au">muban</div><div class="dt">2019-02-20 17:17:43</div><div class="hit">0</div><div class="cm">0</div><div class="op"><a>修改</a> | <a>简改</a> | <a>删除</a></div></div>
</div>

<!-- splitter arrow -->
<svg class="abs" style="left:173px;top:354px" width="5" height="8" viewBox="0 0 5 8"><path d="M4.200.4v6.400L.6 3.600z" fill="#555"/></svg>
<!-- scrollbar -->
<div class="abs" style="left:1266px;top:75px;width:14px;height:567px;background:#f1f1f1"></div>
<div class="abs" style="left:1267.200px;top:89px;width:11.300px;height:255px;background:#c1c1c1"></div>
<svg class="abs" style="left:1269.500px;top:80.500px" width="7" height="4" viewBox="0 0 7 4"><path d="M3.500 .3L6.600 3.600H.4z" fill="#8a8a8a"/></svg>
<svg class="abs" style="left:1269px;top:631px" width="9" height="6" viewBox="0 0 9 6"><path d="M4.500 5L8 1H1z" fill="#505050"/></svg>
<!-- side mini meter -->
<div class="abs" style="left:1270.800px;top:237px;width:12px;height:49.200px;background:#4b5161;border-radius:3px;box-shadow:inset .8px 0 0 #5d6475">
  <svg class="abs" style="left:0;top:0" width="12" height="49" viewBox="0 0 12 49"><rect x="4" y="4.70" width="3.700" height="1.600" fill="#393e4b"/><rect x="4" y="7.05" width="3.700" height="1.600" fill="#393e4b"/><rect x="4" y="9.40" width="3.700" height="1.600" fill="#393e4b"/><rect x="4" y="11.75" width="3.700" height="1.600" fill="#393e4b"/><rect x="4" y="14.10" width="3.700" height="1.600" fill="#393e4b"/><rect x="4" y="16.45" width="3.700" height="1.600" fill="#393e4b"/><rect x="4" y="18.80" width="3.700" height="1.600" fill="#393e4b"/><rect x="4" y="21.15" width="3.700" height="1.600" fill="#393e4b"/><rect x="4" y="23.50" width="3.700" height="1.600" fill="#c9ca3a"/><rect x="4" y="25.85" width="3.700" height="1.600" fill="#c2c93c"/><rect x="4" y="28.20" width="3.700" height="1.600" fill="#b0c742"/><rect x="4" y="30.55" width="3.700" height="1.600" fill="#8fc24e"/><rect x="4" y="32.90" width="3.700" height="1.600" fill="#6dc061"/><rect x="4" y="35.25" width="3.700" height="1.600" fill="#4cc07f"/><rect x="4" y="37.60" width="3.700" height="1.600" fill="#38bf95"/><rect x="4" y="39.95" width="3.700" height="1.600" fill="#2dbfa3"/><rect x="4" y="42.30" width="3.700" height="1.600" fill="#2cbfa4"/></svg>
</div>
<!-- watermark -->
<div class="abs" style="left:1080px;top:583.500px;width:181px;height:37.500px;background:rgba(255,255,255,.3)"></div>
<div id="wm" class="abs" style="left:1075px;top:575.200px;width:190px;height:60px;font-family:'Noto Sans CJK SC','Liberation Sans',sans-serif;font-weight:900;font-size:46px;line-height:60px;color:#838383;-webkit-text-stroke:1.200px #838383;opacity:.55;white-space:nowrap;transform:skewX(-9deg) scaleX(1.012);transform-origin:0 100%;letter-spacing:-1.500px">懒人源码</div>
<!-- LR meter -->
<div class="abs" style="left:1113.600px;top:538.600px;width:84.500px;height:43.800px;background:#030304;border-radius:5.500px;box-shadow:0 0 0 .7px #0c1826">
  <div class="abs" style="left:3.300px;top:9.600px;color:#fff;font-weight:bold;font-size:8px;line-height:9px">L</div>
  <div class="abs" style="left:3.300px;top:28.600px;color:#fff;font-weight:bold;font-size:8px;line-height:9px">R</div>
  <svg class="abs" style="left:10.400px;top:5.700px" width="72" height="35" viewBox="0 0 72 35">
    <defs><linearGradient id="mg" gradientUnits="userSpaceOnUse" x1="0" y1="0" x2="70" y2="0"><stop offset="0" stop-color="#3d4013"/><stop offset=".5" stop-color="#403b14"/><stop offset="1" stop-color="#4f3112"/></linearGradient></defs>
    <rect x="0" y="1.500" width="70" height="11.700" rx="1.500" fill="#0d0b0c"/>
    <rect x="0" y="20.700" width="70" height="11.700" rx="1.500" fill="#0d0b0c"/>
    <g fill="url(#mg)"><ellipse cx="4.00" cy="7.3" rx="2.600" ry="5.300"/><ellipse cx="10.87" cy="7.3" rx="2.600" ry="5.300"/><ellipse cx="17.74" cy="7.3" rx="2.600" ry="5.300"/><ellipse cx="24.61" cy="7.3" rx="2.600" ry="5.300"/><ellipse cx="31.48" cy="7.3" rx="2.600" ry="5.300"/><ellipse cx="38.35" cy="7.3" rx="2.600" ry="5.300"/><ellipse cx="45.22" cy="7.3" rx="2.600" ry="5.300"/><ellipse cx="52.09" cy="7.3" rx="2.600" ry="5.300"/><ellipse cx="58.96" cy="7.3" rx="2.600" ry="5.300"/><ellipse cx="65.83" cy="7.3" rx="2.600" ry="5.300"/><ellipse cx="4.00" cy="26.5" rx="2.600" ry="5.300"/><ellipse cx="10.87" cy="26.5" rx="2.600" ry="5.300"/><ellipse cx="17.74" cy="26.5" rx="2.600" ry="5.300"/><ellipse cx="24.61" cy="26.5" rx="2.600" ry="5.300"/><ellipse cx="31.48" cy="26.5" rx="2.600" ry="5.300"/><ellipse cx="38.35" cy="26.5" rx="2.600" ry="5.300"/><ellipse cx="45.22" cy="26.5" rx="2.600" ry="5.300"/><ellipse cx="52.09" cy="26.5" rx="2.600" ry="5.300"/><ellipse cx="58.96" cy="26.5" rx="2.600" ry="5.300"/><ellipse cx="65.83" cy="26.5" rx="2.600" ry="5.300"/></g>
    <path d="M0 8.400h70M0 27.600h70" stroke="#0a0808" stroke-width=".8" opacity=".55"/>
    <path d="M0 13h70M0 32.200h70" stroke="#2a2030" stroke-width=".6" opacity=".8"/>
  </svg>
</div>
</body>
</html>
